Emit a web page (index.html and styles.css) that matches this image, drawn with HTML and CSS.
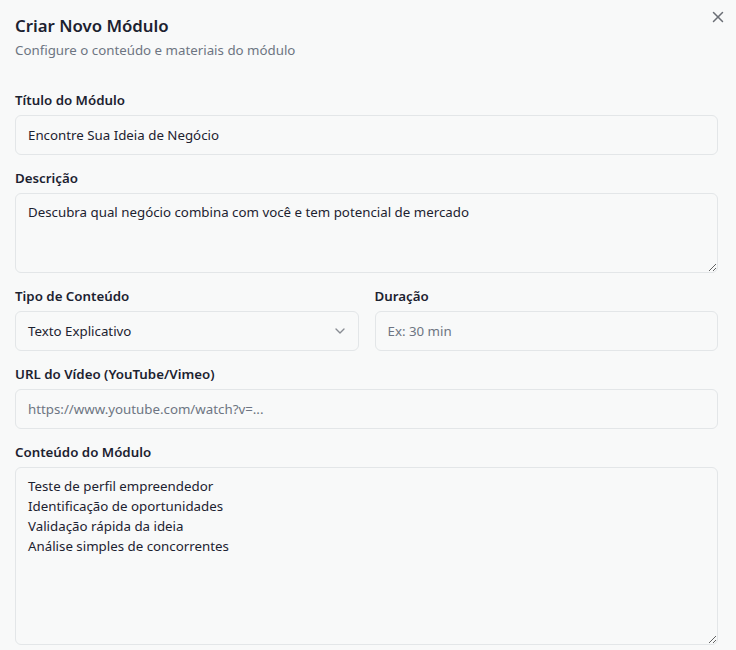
FILE: index.html
```html
<!DOCTYPE html>
<html lang="pt">
<head>
<meta charset="utf-8">
<link rel="stylesheet" href="styles.css">
</head>
<body>
<div class="dialog">
  <button class="close" aria-label="Fechar">
    <svg width="18" height="18" viewBox="0 0 24 24" fill="none" stroke="currentColor" stroke-width="2" stroke-linecap="round" stroke-linejoin="round"><path d="M18 6 6 18"/><path d="m6 6 12 12"/></svg>
  </button>
  <header class="head">
    <h2 class="title">Criar Novo Módulo</h2>
    <p class="subtitle">Configure o conteúdo e materiais do módulo</p>
  </header>
  <form class="form">
    <div class="field">
      <label class="label">Título do Módulo</label>
      <input class="input" type="text" value="Encontre Sua Ideia de Negócio">
    </div>
    <div class="field">
      <label class="label">Descrição</label>
      <textarea class="input textarea short">Descubra qual negócio combina com você e tem potencial de mercado</textarea>
    </div>
    <div class="row">
      <div class="field">
        <label class="label">Tipo de Conteúdo</label>
        <div class="input select">
          <span>Texto Explicativo</span>
          <svg class="chev" width="16" height="16" viewBox="0 0 24 24" fill="none" stroke="currentColor" stroke-width="2" stroke-linecap="round" stroke-linejoin="round"><path d="m6 9 6 6 6-6"/></svg>
        </div>
      </div>
      <div class="field">
        <label class="label">Duração</label>
        <input class="input" type="text" placeholder="Ex: 30 min">
      </div>
    </div>
    <div class="field">
      <label class="label">URL do Vídeo (YouTube/Vimeo)</label>
      <input class="input" type="text" placeholder="https://www.youtube.com/watch?v=...">
    </div>
    <div class="field">
      <label class="label">Conteúdo do Módulo</label>
      <textarea class="input textarea tall">Teste de perfil empreendedor
Identificação de oportunidades
Validação rápida da ideia
Análise simples de concorrentes</textarea>
    </div>
  </form>
</div>
</body>
</html>
```

FILE: styles.css
```css
* { box-sizing: border-box; }
html, body {
  margin: 0;
  padding: 0;
  background: #f8f9f9;
  font-family: "Noto Sans", "Open Sans", sans-serif;
  color: #1c2230;
  overflow: hidden;
}
.dialog {
  position: relative;
  padding: 12px 18px 0 15px;
  width: 736px;
  height: 650px;
}
.close {
  position: absolute;
  top: 8px;
  right: 9px;
  background: none;
  border: 0;
  padding: 0;
  color: #6b6f76;
  width: 18px;
  height: 18px;
  display: flex;
}
.head {
  display: flex;
  flex-direction: column;
  margin-bottom: 33px;
}
.title {
  margin: 0;
  font-size: 16.8px;
  line-height: 28px;
  font-weight: 600;
  color: #1c2230;
}
.subtitle {
  margin: 0;
  font-size: 13.3px;
  line-height: 20px;
  color: #6d7582;
}
.form {
  display: flex;
  flex-direction: column;
  gap: 16px;
}
.field {
  display: flex;
  flex-direction: column;
  gap: 8px;
  min-width: 0;
}
.row {
  display: grid;
  grid-template-columns: 1fr 1fr;
  gap: 16px;
}
.label {
  font-size: 13.3px;
  line-height: 14px;
  font-weight: 600;
  color: #1c2230;
}
.input {
  height: 40px;
  width: 100%;
  border: 1px solid #e3e6e8;
  border-radius: 6px;
  background: #f8f9f9;
  padding: 8px 12px;
  font-family: inherit;
  font-size: 13.3px;
  line-height: 20px;
  color: #1c2230;
  outline: none;
  margin: 0;
}
.input::placeholder { color: #6d7582; }
.textarea {
  resize: vertical;
  display: block;
}
.short { height: 80px; }
.tall { height: 178px; }
.select {
  display: flex;
  align-items: center;
  justify-content: space-between;
}
.chev {
  color: #1c2230;
  opacity: 0.5;
  margin-right: -2px;
}
```
